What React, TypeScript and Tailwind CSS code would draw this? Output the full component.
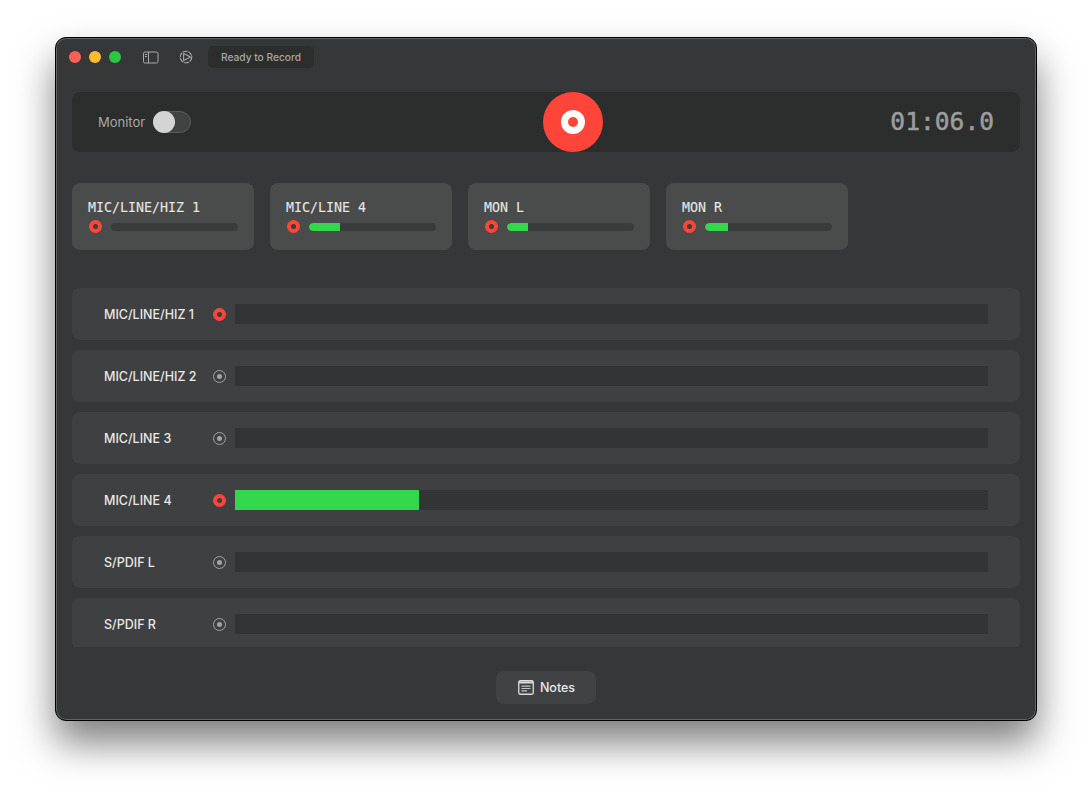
import React from "react";

const sans = "font-['Inter','Noto_Sans',sans-serif]";
const mono = "font-['DejaVu_Sans_Mono','Liberation_Mono',monospace]";

function RecDot({ active }: { active: boolean }) {
  return active ? (
    <span className="flex h-[13px] w-[13px] shrink-0 items-center justify-center rounded-full bg-[#ff453a]">
      <span className="h-[5px] w-[5px] rounded-full bg-[#3c3d3d]" />
    </span>
  ) : (
    <span className="flex h-[13px] w-[13px] shrink-0 items-center justify-center rounded-full border border-[#a3a4a4]">
      <span className="h-[5px] w-[5px] rounded-full bg-[#a3a4a4]" />
    </span>
  );
}

function Card({ name, level }: { name: string; level: number }) {
  return (
    <div className="flex h-[67px] w-[182px] flex-col rounded-lg bg-[#4a4c4b] px-4 pt-[16px]">
      <div className={`${mono} h-[17px] text-[13.3px] leading-[17px] text-[#e6e6e6] [-webkit-text-stroke:0.1px_#e6e6e6]`}>{name}</div>
      <div className="mt-[4px] flex items-center gap-[9px] pl-[1px]">
        <RecDot active />
        <div className="h-2 w-[127px] overflow-hidden rounded-full bg-[#3a3b3b]">
          <div className="h-full rounded-l-full bg-[#32d74b]" style={{ width: level }} />
        </div>
      </div>
    </div>
  );
}

function Row({ name, active, level }: { name: string; active: boolean; level: number }) {
  return (
    <div className="flex h-[52px] shrink-0 items-center rounded-lg bg-[#3f4041] pl-8">
      <div className="w-[109px] pt-[2px] text-[12.5px] font-medium text-[#e8e8e8]">{name}</div>
      <RecDot active={active} />
      <div className="ml-[9px] h-5 w-[753px] bg-[#333435]">
        <div className="h-full bg-[#32d74b]" style={{ width: level }} />
      </div>
    </div>
  );
}

const rows = [
  { name: "MIC/LINE/HIZ 1", active: true, level: 0 },
  { name: "MIC/LINE/HIZ 2", active: false, level: 0 },
  { name: "MIC/LINE 3", active: false, level: 0 },
  { name: "MIC/LINE 4", active: true, level: 184 },
  { name: "S/PDIF L", active: false, level: 0 },
  { name: "S/PDIF R", active: false, level: 0 },
];

export default function App() {
  return (
    <div className={`${sans} min-h-[794px] bg-white pl-[55px] pt-[37px]`}>
      <div className="h-[684px] w-[982px] overflow-hidden rounded-[11px] border border-black bg-[#363738] shadow-[0_22px_38px_rgba(0,0,0,0.5),inset_0_0_0_1px_rgba(255,255,255,0.22)]">
        <div className="flex h-[38px] items-center pl-[13px]">
          <span className="h-3 w-3 rounded-full bg-[#ff5f57]" />
          <span className="ml-2 h-3 w-3 rounded-full bg-[#febc2e]" />
          <span className="ml-2 h-3 w-3 rounded-full bg-[#28c840]" />
          <svg className="ml-[22px]" width="16" height="13" viewBox="0 0 16 13" fill="none" stroke="#a9aaaa" strokeWidth="1">
            <rect x="0.5" y="1" width="14.5" height="11" rx="1.5" />
            <path d="M5.5 1v11" />
            <path d="M2 3.5h2M2 5.5h2" />
          </svg>
          <svg className="ml-[20px] -mt-[1px]" width="14" height="14" viewBox="0 0 14 14" fill="none" stroke="#a9aaaa" strokeWidth="1.1">
            <circle cx="7" cy="7" r="5.8" strokeDasharray="5 0.8" />
            <path d="M4.6 3.6 11.6 7 4.6 10.4" />
            <path d="M4.6 3.6V10.4" />
          </svg>
          <div className="ml-[15px] flex h-[22px] w-[106px] items-center justify-center rounded-[5px] bg-[#2c2d2d] pt-[1px] text-[10.2px] font-medium text-[#a6a7a7]">
            Ready to Record
          </div>
        </div>

        <div className="px-4">
          <div className="relative mt-4 flex h-[60px] items-center justify-between rounded-lg bg-[#2c2d2d] pl-[26px] pr-[26px]">
            <div className="flex items-center gap-2">
              <span className="pt-[2px] text-[13px] text-[#a8a9a9]">Monitor</span>
              <span className="flex h-[22px] w-[38px] items-center rounded-full border border-[#5a5b5b] bg-[#414242]">
                <span className="-ml-px h-[22px] w-[22px] rounded-full bg-[#d4d4d4]" />
              </span>
            </div>
            <div className="absolute left-[471px] top-0 flex h-[60px] w-[60px] items-center justify-center rounded-full bg-[#ff453a]">
              <span className="flex h-6 w-6 items-center justify-center rounded-full bg-white">
                <span className="h-[10px] w-[10px] rounded-full bg-[#ff453a]" />
              </span>
            </div>
            <div className={`${mono} pt-[1px] text-[24.6px] leading-none text-[#9c9d9d] [-webkit-text-stroke:0.5px_#9c9d9d]`}>01:06.0</div>
          </div>

          <div className="mt-[31px] flex gap-4">
            <Card name="MIC/LINE/HIZ 1" level={0} />
            <Card name="MIC/LINE 4" level={31} />
            <Card name="MON L" level={21} />
            <Card name="MON R" level={23} />
          </div>

          <div className="mt-[38px] flex h-[359px] flex-col gap-[10px] overflow-hidden">
            {rows.map((r) => (
              <Row key={r.name} {...r} />
            ))}
          </div>

          <div className="mt-6 flex justify-center">
            <div className="flex h-[33px] w-[100px] items-center justify-center gap-[6px] rounded-lg bg-[#414243] pl-[1px] text-[12.5px] font-medium text-[#e8e8e8]">
              <svg width="16" height="15" viewBox="0 0 16 15" fill="none">
                <rect x="0.75" y="0.75" width="14.5" height="13.5" rx="1.5" stroke="#dcdcdc" strokeWidth="1.3" />
                <path d="M1 2.5h14" stroke="#dcdcdc" strokeWidth="2" />
                <path d="M3.5 6.2h9M3.5 8.5h9M3.5 10.8h5.5" stroke="#c4c4c4" strokeWidth="1.2" />
              </svg>
              <span className="pt-[2px]">Notes</span>
            </div>
          </div>
        </div>
      </div>
    </div>
  );
}
